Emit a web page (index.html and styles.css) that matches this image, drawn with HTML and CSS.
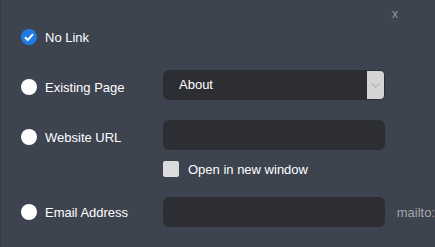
FILE: index.html
```html
<!DOCTYPE html>
<html lang="en">
<head>
    <meta charset="UTF-8">
    <title>Link Options</title>
    <link rel="stylesheet" href="styles.css">
</head>
<body>

    <div class="panel">
        <span class="close">x</span>

        <!-- Sem link -->
        <div class="row row-first">
            <label class="option">
                <span class="radio checked">
                    <svg width="10" height="8" viewBox="0 0 10 8"><path d="M1 4.2 L3.8 7 L9 1.2" fill="none" stroke="#fff" stroke-width="2"/></svg>
                </span>
                No Link
            </label>
        </div>

        <div class="row row-second">
            <label class="option low"><span class="radio"></span>Existing Page</label>
            <div class="select">
                <span class="select-value">About</span>
                <span class="select-arrow">
                    <svg width="9" height="5" viewBox="0 0 9 5"><path d="M0.5 0.5 L4.5 4.3 L8.5 0.5" fill="none" stroke="#a6a6a6" stroke-width="1"/></svg>
                </span>
            </div>
        </div>

        <div class="row">
            <label class="option low"><span class="radio"></span>Website URL</label>
            <div class="input"></div>
        </div>

        <div class="check-row">
            <span class="checkbox"></span>
            Open in new window
        </div>

        <div class="row">
            <label class="option"><span class="radio"></span>Email Address</label>
            <div class="input"></div>
            <span class="suffix">mailto:</span>
        </div>
    </div>

</body>
</html>
```

FILE: styles.css
```css
/* Reset básico */
* {
    margin: 0;
    padding: 0;
    box-sizing: border-box;
}

body {
    font-family: 'Liberation Sans', Arial, sans-serif;
    font-size: 13px;
    background-color: #3e4350;
    color: #ffffff;
    height: 247px;
    overflow: hidden;
}

.panel {
    position: relative;
    height: 247px;
    border-left: 1px solid #363b46;
    padding: 22px 0 0 20px;
}

.close {
    position: absolute;
    top: 7px;
    right: 37px;
    color: #8e97a8;
    font-size: 12px;
}

/* Linhas do formulário */
.row {
    display: flex;
    align-items: center;
    height: 30px;
    margin-top: 20px;
}

.row-first {
    margin-top: 0;
}

.row-second {
    margin-top: 18px;
}

.option {
    display: flex;
    align-items: center;
    width: 142px;
    gap: 8px;
}

.option.low {
    padding-top: 4px;
}

.radio {
    width: 16px;
    height: 16px;
    border-radius: 50%;
    background-color: #ffffff;
    display: flex;
    align-items: center;
    justify-content: center;
}

.radio.checked {
    background-color: #1f7ce6;
}

/* Campos */
.select,
.input {
    width: 222px;
    height: 30px;
    background-color: #2d2e33;
    border-radius: 6px;
}

.select {
    display: flex;
    align-items: stretch;
}

.select-value {
    flex: 1;
    padding-left: 16px;
    padding-top: 7px;
}

.select-arrow {
    width: 17px;
    margin: 1px 1px 1px 0;
    background-color: #d4d4d4;
    border-radius: 0 4px 4px 0;
    display: flex;
    justify-content: center;
    padding-top: 12px;
}

.check-row {
    display: flex;
    align-items: center;
    gap: 9px;
    height: 16px;
    margin: 11px 0 0 142px;
}

.checkbox {
    width: 16px;
    height: 16px;
    background-color: #dcdcdc;
    border-radius: 2px;
}

.suffix {
    margin-left: 12px;
    color: #a4a6ab;
}
```
